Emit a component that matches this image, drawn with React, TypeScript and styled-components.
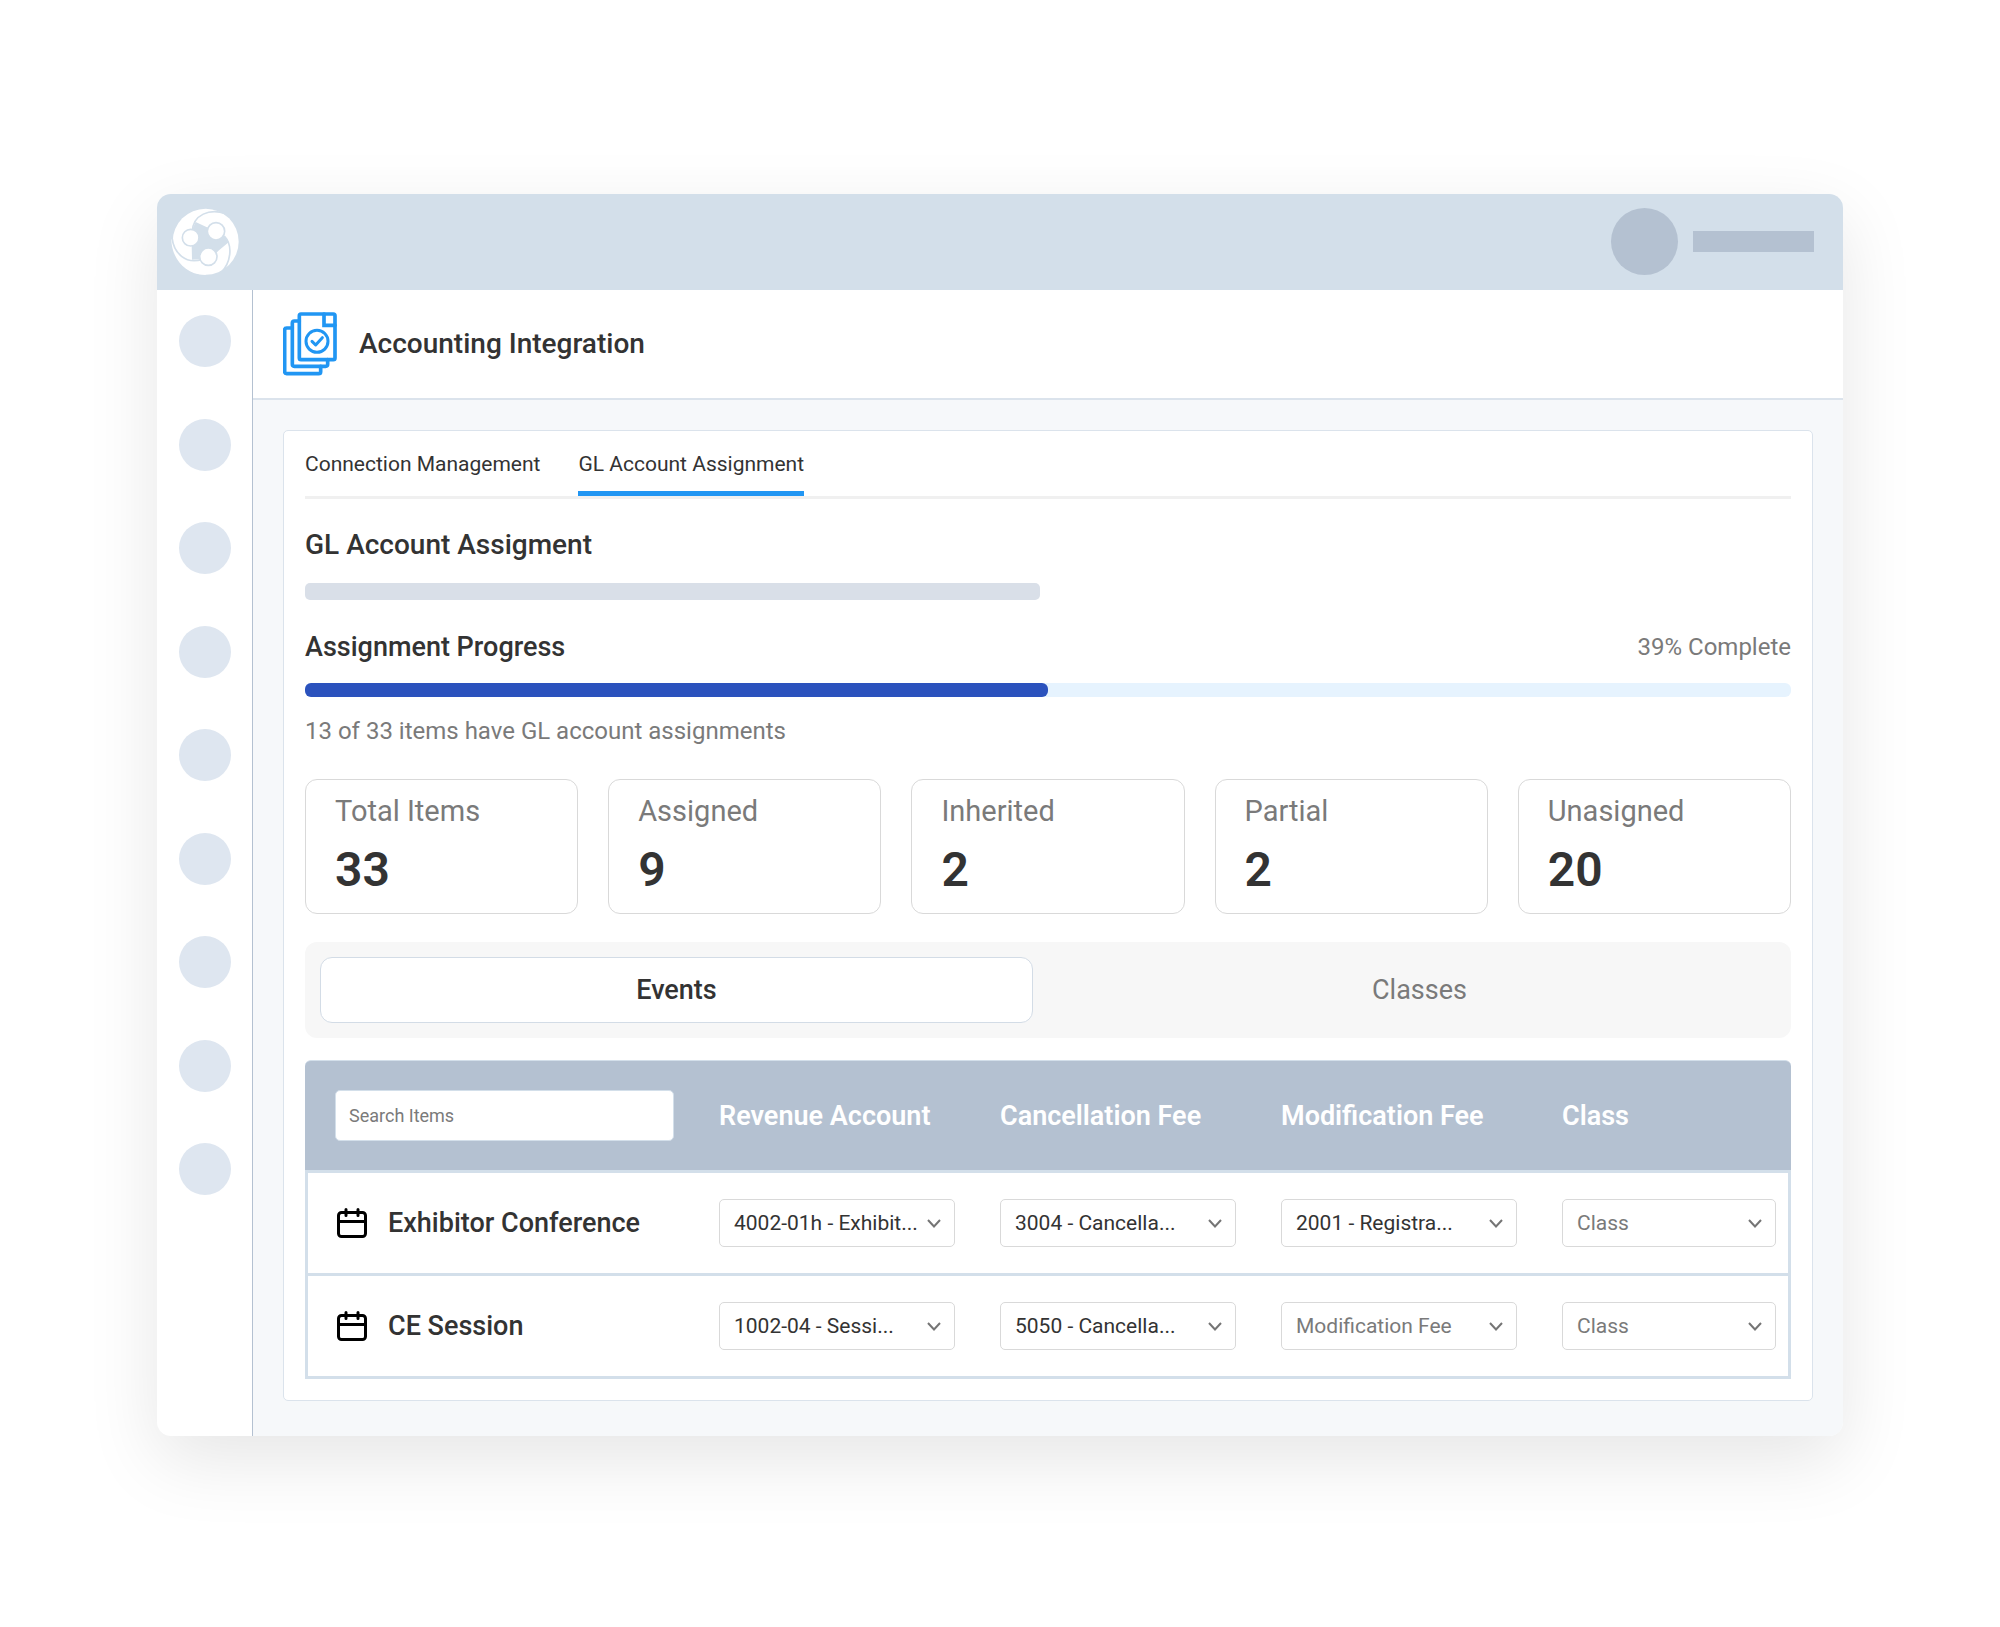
import React from "react";
import styled, { createGlobalStyle } from "styled-components";

const color = {
  header: "#d3dfea",
  slate: "#b4c1d1",
  dot: "#dee6f0",
  line: "#dbe3ec",
  text: "#333333",
  muted: "#7a7a7a",
  accent: "#2196f3",
};

const GlobalStyle = createGlobalStyle`
  *, *::before, *::after { box-sizing: border-box; }
  body {
    margin: 0;
    background: #ffffff;
    color: ${color.text};
    font-family: Roboto, "Liberation Sans", sans-serif;
  }
  button, input, select { font: inherit; color: inherit; margin: 0; }
  h1, h2, h3, p, dl, dt, dd { margin: 0; }
`;

const Page = styled.div`
  padding: 194px 157px 192px;
`;

const Window = styled.div`
  border-radius: 14px;
  overflow: hidden;
  background: #ffffff;
  box-shadow: 0 24px 72px rgba(0, 0, 0, 0.1);
`;

const TopBar = styled.header`
  display: flex;
  align-items: flex-start;
  justify-content: space-between;
  height: 96px;
  padding: 14px 29px 0 14px;
  background: ${color.header};
`;

const Account = styled.div`
  display: flex;
  align-items: center;
  gap: 15px;
`;

const Avatar = styled.span`
  width: 67px;
  height: 67px;
  border-radius: 50%;
  background: ${color.slate};
`;

const AccountName = styled.span`
  width: 121px;
  height: 21px;
  background: ${color.slate};
`;

const Body = styled.div`
  display: flex;
`;

const Sidebar = styled.nav`
  flex: none;
  width: 96px;
  padding: 25px 0 0 1px;
  border-right: 1px solid ${color.slate};
`;

const DotList = styled.div`
  display: flex;
  flex-direction: column;
  align-items: center;
  justify-content: space-between;
  height: 880px;
`;

const Dot = styled.span`
  width: 52px;
  height: 52px;
  border-radius: 50%;
  background: ${color.dot};
`;

const Main = styled.main`
  flex: 1;
  min-width: 0;
  background: #f6f8fa;
`;

const TitleBar = styled.div`
  display: flex;
  align-items: center;
  gap: 22px;
  height: 110px;
  padding: 0 30px;
  background: #ffffff;
  border-bottom: 2px solid ${color.line};
`;

const Title = styled.h1`
  font-size: 28px;
  line-height: 32px;
  font-weight: 500;
`;

const Panel = styled.section`
  margin: 30px 30px 35px 30px;
  padding: 0 21px 21px 21px;
  background: #ffffff;
  border: 1px solid ${color.line};
  border-radius: 5px;
`;

const TabList = styled.div`
  display: flex;
  gap: 38px;
  border-bottom: 3px solid #f0f0f0;
`;

const Tab = styled.button<{ $active?: boolean }>`
  padding: 21px 0 15px;
  border: 0;
  border-bottom: 5px solid ${(p) => (p.$active ? color.accent : "transparent")};
  background: none;
  font-size: 21px;
  line-height: 24px;
`;

const Heading = styled.h2`
  margin: 30px 0 22px;
  font-size: 28px;
  line-height: 32px;
  font-weight: 500;
`;

const TextPlaceholder = styled.div`
  width: 735px;
  max-width: 100%;
  height: 17px;
  border-radius: 5px;
  background: #d9dfe8;
`;

const ProgressHead = styled.div`
  display: flex;
  justify-content: space-between;
  align-items: center;
  margin: 31px 0 20px;
`;

const SubHeading = styled.h3`
  font-size: 27px;
  line-height: 32px;
  font-weight: 500;
`;

const Muted = styled.p`
  font-size: 24px;
  line-height: 28px;
  color: ${color.muted};
`;

const Track = styled.div`
  height: 14px;
  margin-bottom: 20px;
  border-radius: 6px;
  background: #e6f3fe;
`;

const Fill = styled.div`
  width: 50%;
  height: 100%;
  border-radius: 6px;
  background: #2b52bd;
`;

const Stats = styled.dl`
  display: grid;
  grid-template-columns: repeat(5, 1fr);
  gap: 30px;
  margin: 34px 0 28px;
`;

const Stat = styled.div`
  padding: 15px 29px 19px;
  border: 1px solid #d9d9d9;
  border-radius: 12px;
`;

const StatLabel = styled.dt`
  margin-bottom: 19px;
  font-size: 29px;
  line-height: 32px;
  color: ${color.muted};
`;

const StatValue = styled.dd`
  font-size: 48px;
  line-height: 48px;
  font-weight: 600;
`;

const Segments = styled.div`
  display: grid;
  grid-template-columns: 1fr 1fr;
  gap: 30px;
  margin-bottom: 22px;
  padding: 15px;
  border-radius: 12px;
  background: #f7f7f7;
`;

const Segment = styled.button<{ $active?: boolean }>`
  height: 66px;
  padding: 0;
  border: 1px solid ${(p) => (p.$active ? "#d3dce6" : "transparent")};
  border-radius: 12px;
  background: ${(p) => (p.$active ? "#ffffff" : "none")};
  color: ${(p) => (p.$active ? color.text : color.muted)};
  font-size: 27px;
  font-weight: ${(p) => (p.$active ? 500 : 400)};
`;

const Table = styled.table`
  width: 100%;
  table-layout: fixed;
  border-collapse: separate;
  border-spacing: 0;
`;

const Col = styled.col<{ $width?: number }>`
  width: ${(p) => (p.$width ? `${p.$width}px` : "auto")};
`;

const HeadCell = styled.th`
  height: 113px;
  padding: 0;
  background: ${color.slate};
  border-top: 1px solid ${color.header};
  border-bottom: 3px solid ${color.header};
  color: #ffffff;
  font-size: 27px;
  line-height: 32px;
  font-weight: 600;
  text-align: left;
  &:first-child {
    padding: 0 45px 0 30px;
    border-top-left-radius: 6px;
  }
  &:last-child {
    border-top-right-radius: 6px;
  }
`;

const Search = styled.input`
  display: block;
  width: 100%;
  height: 51px;
  padding: 0 13px;
  border: 1px solid ${color.header};
  border-radius: 5px;
  background: #ffffff;
  font-size: 18px;
  font-weight: 400;
  &::placeholder {
    color: ${color.muted};
    opacity: 1;
  }
`;

const Cell = styled.td`
  height: 103px;
  padding: 0 45px 0 0;
  border-bottom: 3px solid ${color.header};
  &:last-child {
    padding-right: 12px;
    border-right: 3px solid ${color.header};
  }
`;

const NameCell = styled.th`
  height: 103px;
  padding: 0 0 0 29px;
  border-left: 3px solid ${color.header};
  border-bottom: 3px solid ${color.header};
  text-align: left;
`;

const ItemName = styled.span`
  display: flex;
  align-items: center;
  gap: 21px;
  font-size: 27px;
  line-height: 32px;
  font-weight: 500;
`;

const SelectBox = styled.div`
  position: relative;
  display: flex;
  align-items: center;
`;

const Select = styled.select<{ $empty: boolean }>`
  appearance: none;
  width: 100%;
  height: 48px;
  padding: 0 32px 0 14px;
  border: 1px solid #d9d9d9;
  border-radius: 5px;
  background: #ffffff;
  color: ${(p) => (p.$empty ? color.muted : color.text)};
  font-size: 21px;
`;

const Chevron = styled.svg`
  position: absolute;
  right: 14px;
  pointer-events: none;
`;

const Logo = () => (
  <svg width="68" height="67" viewBox="34 36 204 201" aria-hidden="true">
    <circle cx="138" cy="137" r="99" fill="#fff" />
    <path d="M35 128C34 185 78 240 140 236L60 170Z" fill="#fff" />
    <g fill="none" stroke={color.header} strokeWidth="5">
      <path d="M198 53C150 36 100 56 98 106" />
      <path d="M184 230C212 202 222 150 194 120" />
      <path d="M37 124C42 172 78 206 128 190" />
    </g>
    <path
      d="M108 78L145 95L192 116L207 139L178 163L150 190L118 190L97 191L96 148L93 110Z"
      fill={color.header}
    />
    <g fill="#fff" stroke={color.header} strokeWidth="5">
      <circle cx="93" cy="125" r="25" />
      <circle cx="169" cy="106" r="26" />
      <circle cx="146" cy="182" r="26" />
    </g>
  </svg>
);

const DocumentsIcon = () => (
  <svg width="54" height="64" viewBox="39 37 162 192" fill="none" stroke={color.accent} strokeWidth="11" strokeLinejoin="round" strokeLinecap="round" aria-hidden="true">
    <rect x="88" y="43" width="107" height="137" rx="5" />
    <path d="M162 43V77H195" strokeLinejoin="miter" />
    <path d="M88 64H73Q67 64 67 70V194Q67 200 73 200H167Q173 200 173 194V180" />
    <path d="M67 85H50Q44 85 44 91V216Q44 222 50 222H146Q152 222 152 216V200" />
    <circle cx="141" cy="125" r="33" strokeWidth="9" />
    <path d="M126 125L137 136L157 114" strokeWidth="9" />
  </svg>
);

const CalendarIcon = () => (
  <svg width="30" height="30" viewBox="0 0 30 30" fill="none" stroke="#000" strokeWidth="3" strokeLinecap="round" aria-hidden="true">
    <rect x="1.5" y="4.5" width="27" height="24" rx="3" />
    <path d="M2 13.5H28M9 1.5V7.5M21 1.5V7.5" />
  </svg>
);

type Field = { value: string; empty?: boolean };

const columns = ["Revenue Account", "Cancellation Fee", "Modification Fee", "Class"];

const rows: { name: string; fields: Field[] }[] = [
  {
    name: "Exhibitor Conference",
    fields: [
      { value: "4002-01h - Exhibit..." },
      { value: "3004 - Cancella..." },
      { value: "2001 - Registra..." },
      { value: "Class", empty: true },
    ],
  },
  {
    name: "CE Session",
    fields: [
      { value: "1002-04 - Sessi..." },
      { value: "5050 - Cancella..." },
      { value: "Modification Fee", empty: true },
      { value: "Class", empty: true },
    ],
  },
];

const stats = [
  ["Total Items", 33],
  ["Assigned", 9],
  ["Inherited", 2],
  ["Partial", 2],
  ["Unasigned", 20],
] as const;

const AccountSelect = ({ label, field }: { label: string; field: Field }) => (
  <SelectBox>
    <Select aria-label={label} $empty={!!field.empty} defaultValue={field.value}>
      <option>{field.value}</option>
    </Select>
    <Chevron width="14" height="9" viewBox="0 0 14 9" fill="none" stroke="#757575" strokeWidth="2" aria-hidden="true">
      <path d="M1 1L7 7.5L13 1" />
    </Chevron>
  </SelectBox>
);

export default function App() {
  return (
    <>
      <GlobalStyle />
      <Page>
        <Window>
          <TopBar>
            <Logo />
            <Account>
              <Avatar />
              <AccountName />
            </Account>
          </TopBar>
          <Body>
            <Sidebar>
              <DotList>
                {Array.from({ length: 9 }, (_, i) => (
                  <Dot key={i} />
                ))}
              </DotList>
            </Sidebar>
            <Main>
              <TitleBar>
                <DocumentsIcon />
                <Title>Accounting Integration</Title>
              </TitleBar>
              <Panel>
                <TabList role="tablist">
                  <Tab role="tab" aria-selected={false}>Connection Management</Tab>
                  <Tab role="tab" aria-selected $active>GL Account Assignment</Tab>
                </TabList>
                <Heading>GL Account Assigment</Heading>
                <TextPlaceholder />
                <ProgressHead>
                  <SubHeading>Assignment Progress</SubHeading>
                  <Muted>39% Complete</Muted>
                </ProgressHead>
                <Track>
                  <Fill />
                </Track>
                <Muted>13 of 33 items have GL account assignments</Muted>
                <Stats>
                  {stats.map(([label, value]) => (
                    <Stat key={label}>
                      <StatLabel>{label}</StatLabel>
                      <StatValue>{value}</StatValue>
                    </Stat>
                  ))}
                </Stats>
                <Segments>
                  <Segment $active>Events</Segment>
                  <Segment>Classes</Segment>
                </Segments>
                <Table>
                  <colgroup>
                    <Col $width={414} />
                    <Col $width={281} />
                    <Col $width={281} />
                    <Col $width={281} />
                    <Col />
                  </colgroup>
                  <thead>
                    <tr>
                      <HeadCell>
                        <Search type="search" placeholder="Search Items" aria-label="Search Items" />
                      </HeadCell>
                      {columns.map((c) => (
                        <HeadCell key={c} scope="col">{c}</HeadCell>
                      ))}
                    </tr>
                  </thead>
                  <tbody>
                    {rows.map((row) => (
                      <tr key={row.name}>
                        <NameCell scope="row">
                          <ItemName>
                            <CalendarIcon />
                            {row.name}
                          </ItemName>
                        </NameCell>
                        {row.fields.map((field, i) => (
                          <Cell key={columns[i]}>
                            <AccountSelect label={`${columns[i]} for ${row.name}`} field={field} />
                          </Cell>
                        ))}
                      </tr>
                    ))}
                  </tbody>
                </Table>
              </Panel>
            </Main>
          </Body>
        </Window>
      </Page>
    </>
  );
}
